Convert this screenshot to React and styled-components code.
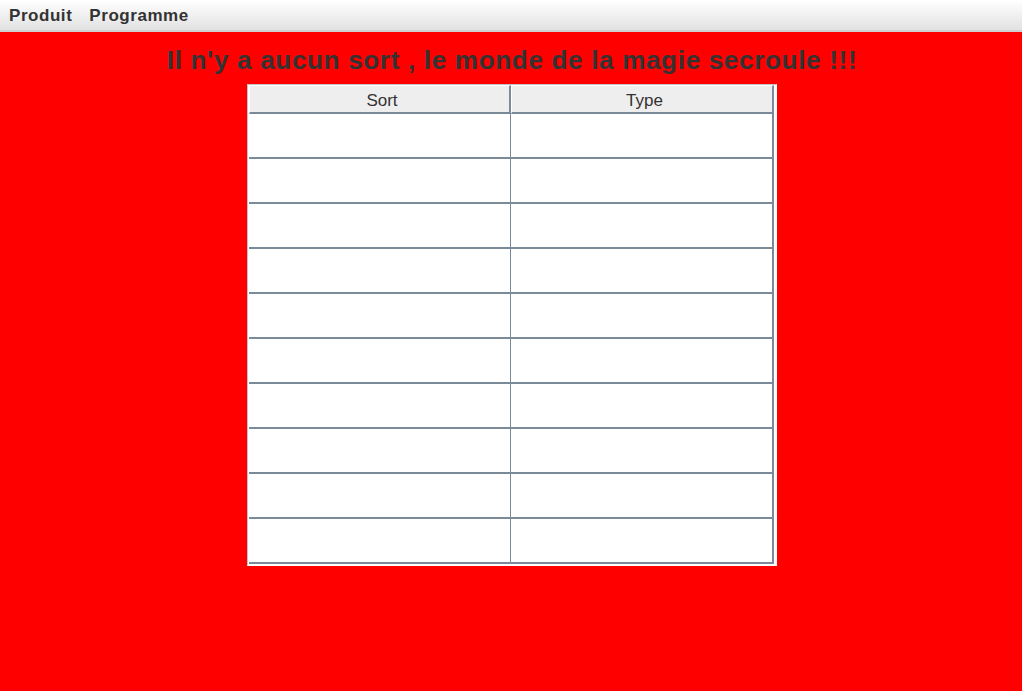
import React from "react";
import styled, { createGlobalStyle } from "styled-components";

const GRID = "#7a8a99";

const GlobalStyle = createGlobalStyle`
  html, body {
    margin: 0;
    padding: 0;
    background: #ff0000;
    font-family: "Liberation Sans", Arial, sans-serif;
  }
`;

const Page = styled.div`
  width: 1022px;
  height: 691px;
  display: flex;
  flex-direction: column;
  background: #ff0000;
`;

const MenuBar = styled.div`
  height: 30px;
  display: flex;
  align-items: center;
  gap: 17px;
  padding: 0 0 0 9px;
  background: linear-gradient(#ffffff, #f3f3f3 40%, #e2e2e2);
  border-bottom: 2px solid #d0d0d0;
`;

const MenuItem = styled.span`
  font-size: 17px;
  font-weight: bold;
  letter-spacing: 0.55px;
  color: #333333;
  padding-top: 1px;
`;

const Main = styled.main`
  display: flex;
  flex-direction: column;
  align-items: center;
  padding-left: 2px;
`;

const Title = styled.h1`
  margin: 0;
  padding: 13px 0 0 0;
  height: 39px;
  font-size: 26px;
  letter-spacing: 0.7px;
  line-height: 30px;
  font-weight: bold;
  color: #333333;
`;

const Frame = styled.div`
  width: 525px;
  background: #ffffff;
  border: 1px solid;
  border-color: #c4c4c4 #ffffff #ffffff #c4c4c4;
  padding: 0 2px 1px 1px;
`;

const Grid = styled.div`
  display: grid;
  grid-template-columns: 262px 263px;
`;

const HeaderCell = styled.div`
  box-sizing: border-box;
  height: 29px;
  background: #eeeeee;
  border-left: 1px solid #ffffff;
  border-top: 1px solid #ffffff;
  border-right: 2px solid ${GRID};
  border-bottom: 2px solid ${GRID};
  display: flex;
  align-items: center;
  justify-content: center;
  padding: 4px 0 0 5px;
  font-size: 17px;
  color: #333333;
`;

const Cell = styled.div`
  height: 45px;
  box-sizing: border-box;
  background: #ffffff;
  border-bottom: 2px solid ${GRID};
  border-right: ${(p) => (p.$last ? 2 : 1)}px solid ${GRID};
`;

const rows = Array.from({ length: 10 }, (_, i) => i);

export default function App() {
  return (
    <Page>
      <GlobalStyle />
      <MenuBar>
        <MenuItem>Produit</MenuItem>
        <MenuItem>Programme</MenuItem>
      </MenuBar>
      <Main>
        <Title>Il n'y a aucun sort , le monde de la magie secroule !!!</Title>
        <Frame>
          <Grid>
            <HeaderCell>Sort</HeaderCell>
            <HeaderCell>Type</HeaderCell>
            {rows.map((r) => (
              <React.Fragment key={r}>
                <Cell />
                <Cell $last />
              </React.Fragment>
            ))}
          </Grid>
        </Frame>
      </Main>
    </Page>
  );
}
